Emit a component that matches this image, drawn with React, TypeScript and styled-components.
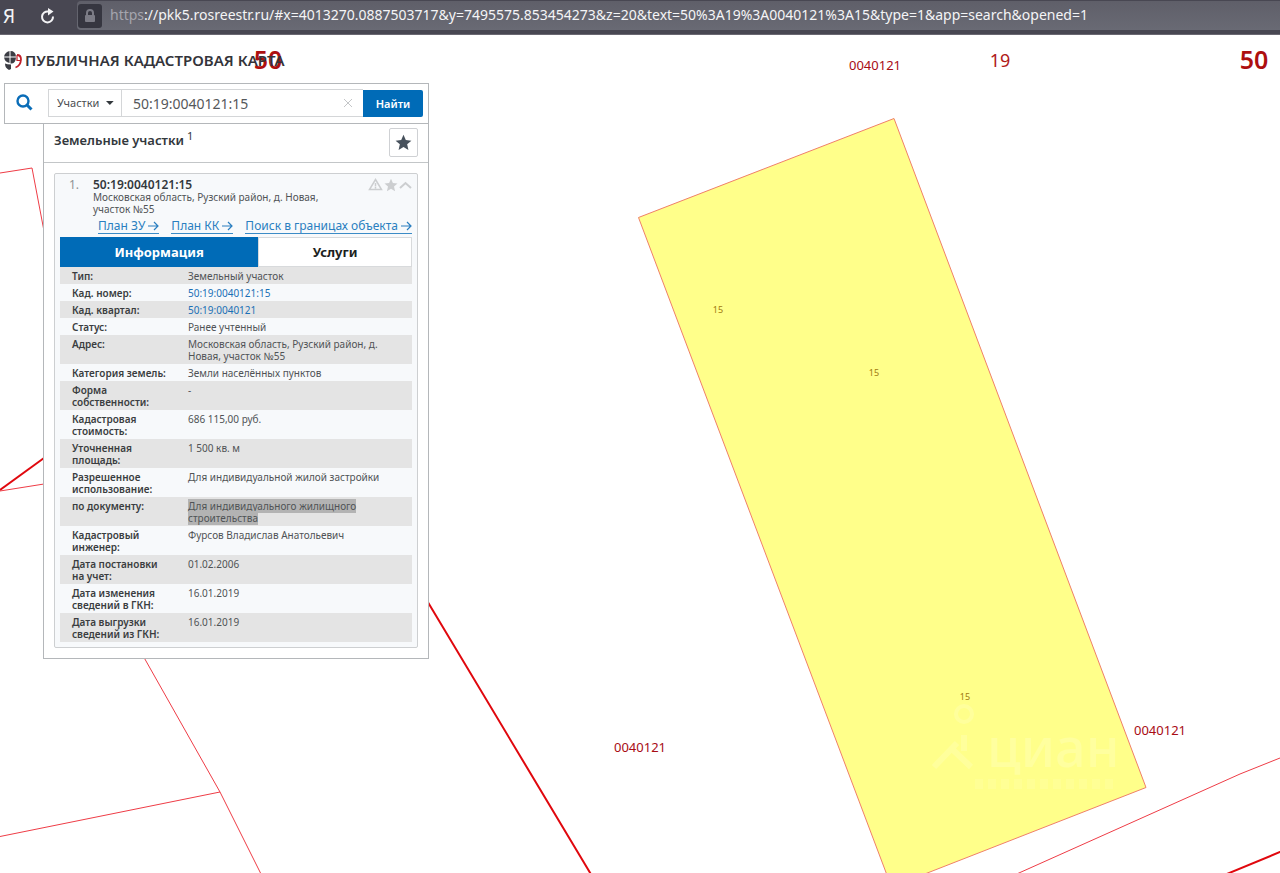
import React from 'react';
import styled, { createGlobalStyle, css } from 'styled-components';

const Global = createGlobalStyle`
  * { box-sizing: border-box; }
  body { margin: 0; background: #fff; }
  body, button, input, select { font-family: "Noto Sans", "Open Sans", sans-serif; }
`;

const Page = styled.div`
  display: flex;
  flex-direction: column;
  min-height: 100vh;
  color: #33383d;
`;

const BrowserBar = styled.header`
  display: flex;
  align-items: stretch;
  height: 35px;
  padding: 1px 0 4px;
  background: #484752;
  border-bottom: 1px solid #6a6872;
  color: #f4f4f6;
`;

const BarButton = styled.button<{ $width: number }>`
  display: flex;
  align-items: center;
  justify-content: flex-start;
  width: ${(p) => p.$width}px;
  padding: 0 0 0 3px;
  border: 0;
  background: none;
  color: inherit;
  font-size: 19px;
  line-height: 24px;
`;

const AddressBox = styled.div`
  display: flex;
  flex: 1;
  align-items: center;
  gap: 8px;
  min-width: 0;
  padding-left: 1px;
  border-radius: 4px 0 0 4px;
  background: linear-gradient(#5f5f69, #696a74);
`;

const LockBox = styled.span`
  display: flex;
  align-items: center;
  justify-content: center;
  width: 24px;
  height: 24px;
  border-radius: 3px;
  background: #363640;
`;

const Address = styled.div`
  overflow: hidden;
  padding-bottom: 2px;
  font-size: 14px;
  line-height: 20px;
  white-space: nowrap;
`;

const Scheme = styled.span`
  color: #a5a5ad;
`;

const MapArea = styled.main`
  position: relative;
  flex: 1;
  overflow: hidden;
`;

const MapCanvas = styled.svg`
  position: absolute;
  inset: 0;
  width: 100%;
  height: 100%;
`;

const labelKinds = {
  region: css`color: #ad0f0f; font-size: 25px; font-weight: 600;`,
  district: css`color: #b01a1a; font-size: 18px;`,
  quarter: css`color: #a80c14; font-size: 13px;`,
  parcel: css`color: #a07a10; font-size: 9px;`,
};

const MapLabel = styled.span<{ $x: number; $y: number; $kind: keyof typeof labelKinds }>`
  position: absolute;
  left: ${(p) => p.$x}px;
  top: ${(p) => p.$y}px;
  line-height: 1;
  transform: translate(-50%, -50%);
  ${(p) => labelKinds[p.$kind]}
`;

const Sidebar = styled.div`
  position: relative;
  width: 429px;
  max-width: 100%;
  padding: 0 0 16px 4px;
`;

const Brand = styled.h1`
  display: flex;
  align-items: center;
  gap: 3px;
  height: 48px;
  margin: 0;
  padding-top: 1px;
  color: #33343a;
  font-size: 15px;
  font-weight: 600;
  line-height: 20px;
  white-space: nowrap;
`;

const SearchBar = styled.form`
  display: flex;
  align-items: center;
  height: 41px;
  padding: 0 5px 1px 0;
  border: 1px solid #b4b7ba;
  background: #fff;
`;

const SearchTab = styled.button`
  display: flex;
  align-items: center;
  justify-content: center;
  width: 43px;
  height: 28px;
  padding: 0 4px 2px 0;
  border: 0;
  background: none;
`;

const Field = styled.div`
  display: flex;
  align-items: center;
  height: 28px;
  border: 1px solid #d4d6d8;
`;

const KindField = styled(Field)`
  gap: 5px;
  width: 74px;
  padding: 0 7px 0 8px;
`;

const KindSelect = styled.select`
  appearance: none;
  width: 46px;
  padding: 0;
  border: 0;
  background: none;
  color: #4a4d50;
  font-size: 11px;
  line-height: 16px;
`;

const QueryField = styled(Field)`
  flex: 1;
  min-width: 0;
  padding: 0 10px 0 11px;
  border-left: 0;
  border-right: 0;
`;

const QueryInput = styled.input`
  flex: 1;
  min-width: 0;
  padding: 2px 0 0;
  border: 0;
  outline: 0;
  background: none;
  color: #55585b;
  font-size: 14px;
  line-height: 20px;
`;

const IconButton = styled.button`
  display: flex;
  padding: 0;
  border: 0;
  background: none;
`;

const FindButton = styled.button`
  width: 60px;
  height: 27px;
  padding: 0;
  border: 0;
  border-radius: 0 2px 2px 0;
  background: #006bb7;
  color: #fff;
  font-size: 11px;
  font-weight: 600;
`;

const Results = styled.section`
  margin-left: 39px;
  padding-bottom: 10px;
  border: 1px solid #b4b7ba;
  border-top: 0;
  background: #fff;
`;

const ResultsHead = styled.div`
  display: flex;
  align-items: center;
  justify-content: space-between;
  height: 39px;
  padding: 0 10px 2px;
  border-bottom: 1px solid #c3c6c8;
`;

const ResultsTitle = styled.h2`
  display: flex;
  gap: 3px;
  margin: 0;
  padding-bottom: 5px;
  font-size: 13px;
  font-weight: 600;
  line-height: 20px;
`;

const Count = styled.sup`
  font-size: 11px;
  font-weight: 400;
  line-height: 12px;
`;

const FavouriteButton = styled.button`
  display: flex;
  align-items: center;
  justify-content: center;
  width: 29px;
  height: 29px;
  padding: 0;
  border: 1px solid #cfd1d4;
  border-radius: 2px;
  background: #fff;
`;

const Card = styled.article`
  margin: 10px 10px 0;
  padding: 4px 5px 5px;
  border: 1px solid #cdcfd1;
  border-radius: 2px;
  background: #f7f9fb;
`;

const CardHead = styled.div`
  display: flex;
  padding-left: 9px;
`;

const Ordinal = styled.span`
  width: 24px;
  color: #909395;
  font-size: 12px;
  line-height: 13px;
`;

const Summary = styled.div`
  flex: 1;
  min-width: 0;
`;

const ParcelNumber = styled.h3`
  margin: 0;
  font-size: 12px;
  font-weight: 600;
  line-height: 13px;
`;

const ParcelAddress = styled.p`
  width: 240px;
  margin: 0;
  color: #505356;
  font-size: 10px;
  line-height: 12px;
`;

const CardTools = styled.div`
  display: flex;
  align-items: center;
  align-self: flex-start;
  gap: 1px;
  height: 13px;
`;

const CardLinks = styled.nav`
  display: flex;
  justify-content: flex-end;
  gap: 12px;
  padding: 4px 0 3px;
`;

const CardLink = styled.a`
  display: inline-flex;
  align-items: center;
  gap: 3px;
  height: 15px;
  border-bottom: 1px solid #3b8bc6;
  color: #2a7fc0;
  font-size: 12px;
  line-height: 14px;
  text-decoration: none;
  white-space: nowrap;
`;

const Tabs = styled.div`
  display: flex;
  height: 30px;
`;

const Tab = styled.button<{ $active?: boolean }>`
  flex: ${(p) => (p.$active ? 199 : 154)} 1 0;
  padding: 0;
  border: 1px solid ${(p) => (p.$active ? '#006bb7' : '#d8dadc')};
  background: ${(p) => (p.$active ? '#006bb7' : '#fff')};
  color: ${(p) => (p.$active ? '#fff' : '#1d1f21')};
  font-size: 13px;
  font-weight: 700;
`;

const Details = styled.table`
  width: 100%;
  border-collapse: collapse;
  table-layout: fixed;
  font-size: 10px;
  line-height: 12px;
  text-align: left;
`;

const DetailRow = styled.tr`
  vertical-align: top;
  &:nth-child(odd) { background: #e4e4e4; }
`;

const DetailName = styled.th`
  width: 128px;
  padding: 3px 16px 2px 12px;
  color: #3a3d40;
  font-weight: 600;
`;

const DetailValue = styled.td`
  padding: 3px 26px 2px 0;
  color: #505356;
`;

const DetailLink = styled.a`
  color: #1a70b6;
  text-decoration: none;
`;

const Selected = styled.mark`
  background: #b3b3b3;
  color: inherit;
`;

type Detail = { name: string; value: string; kind?: 'link' | 'selected' };

const details: Detail[] = [
  { name: 'Тип:', value: 'Земельный участок' },
  { name: 'Кад. номер:', value: '50:19:0040121:15', kind: 'link' },
  { name: 'Кад. квартал:', value: '50:19:0040121', kind: 'link' },
  { name: 'Статус:', value: 'Ранее учтенный' },
  { name: 'Адрес:', value: 'Московская область, Рузский район, д. Новая, участок №55' },
  { name: 'Категория\u00a0земель:', value: 'Земли населённых пунктов' },
  { name: 'Форма собственности:', value: '-' },
  { name: 'Кадастровая стоимость:', value: '686 115,00 руб.' },
  { name: 'Уточненная площадь:', value: '1 500 кв. м' },
  { name: 'Разрешенное использование:', value: 'Для индивидуальной жилой застройки' },
  { name: 'по документу:', value: 'Для индивидуального жилищного строительства', kind: 'selected' },
  { name: 'Кадастровый инженер:', value: 'Фурсов Владислав Анатольевич' },
  { name: 'Дата постановки на\u00a0учет:', value: '01.02.2006' },
  { name: 'Дата изменения сведений в\u00a0ГКН:', value: '16.01.2019' },
  { name: 'Дата выгрузки сведений из\u00a0ГКН:', value: '16.01.2019' },
];

const Star = ({ size, color }: { size: number; color: string }) => (
  <svg width={size} height={size} viewBox="0 0 20 20" fill={color} aria-hidden="true">
    <path d="M10 1l2.700 6.100 6.600.700-5 4.400 1.500 6.600L10 15.400l-5.800 3.400 1.500-6.600-5-4.400 6.600-.700z" />
  </svg>
);

const Arrow = () => (
  <svg width="11" height="10" viewBox="0 0 11 10" fill="none" stroke="#2a7fc0" strokeWidth="1.200" aria-hidden="true">
    <path d="M0 5h10M6 1l4 4-4 4" />
  </svg>
);

function Value({ value, kind }: Detail) {
  if (kind === 'link') return <DetailLink href="#">{value}</DetailLink>;
  if (kind === 'selected') return <Selected>{value}</Selected>;
  return <>{value}</>;
}

function CadastralMap() {
  return (
    <>
      <MapCanvas aria-hidden="true">
        <g fill="none" stroke="#ee3c46" strokeWidth="1">
          <path d="M0 138L32 133L60 280" />
          <path d="M0 456L44 449" />
          <path d="M120 580L220 757L262 841L310 930" />
          <path d="M0 801.500L220 757" />
          <path d="M1010 842L1240 739L1280 723L1700 560" />
        </g>
        <g fill="none" stroke="#e0080e" strokeWidth="2">
          <path d="M0 455L44 423" />
          <path d="M400 520L429 569L592 841L640 920" />
          <path d="M1222 841L1280 817L1700 640" />
        </g>
        <path d="M638.500 182.500L894 83.500L1146 752.500L891.500 852Z" fill="#ffff8a" stroke="#f08068" />
        <g fill="none" stroke="#fff" strokeOpacity=".16">
          <circle cx="964" cy="679" r="8" strokeWidth="4" />
          <path d="M934 732L957 708M950 712L971 732M964 700V716" strokeWidth="6" />
          <path d="M975 749H1116" strokeWidth="10" strokeOpacity=".1" strokeDasharray="8 5" />
        </g>
        <text x="987" y="732" fill="#fff" fillOpacity=".18" fontFamily="Noto Sans" fontSize="54" fontWeight="500">циан</text>
      </MapCanvas>
      <MapLabel $kind="region" $x={268} $y={24}>50</MapLabel>
      <MapLabel $kind="quarter" $x={875} $y={30}>0040121</MapLabel>
      <MapLabel $kind="district" $x={1000} $y={25}>19</MapLabel>
      <MapLabel $kind="region" $x={1254} $y={24}>50</MapLabel>
      <MapLabel $kind="parcel" $x={718} $y={274}>15</MapLabel>
      <MapLabel $kind="parcel" $x={874} $y={337}>15</MapLabel>
      <MapLabel $kind="parcel" $x={965} $y={661}>15</MapLabel>
      <MapLabel $kind="quarter" $x={1160} $y={695}>0040121</MapLabel>
      <MapLabel $kind="quarter" $x={640} $y={712}>0040121</MapLabel>
    </>
  );
}

export default function App() {
  return (
    <Page>
      <Global />
      <BrowserBar>
        <BarButton $width={37} aria-label="Яндекс">Я</BarButton>
        <BarButton $width={40} aria-label="Обновить">
          <svg width="16" height="16" viewBox="0 0 16 16" fill="none" stroke="currentColor" strokeWidth="2">
            <path d="M13 8.500A5.500 5.500 0 1 1 8.500 3.500" />
            <path d="M8 0L13.500 3.500L8 7.500Z" fill="currentColor" stroke="none" />
          </svg>
        </BarButton>
        <AddressBox>
          <LockBox>
            <svg width="12" height="14" viewBox="0 0 12 14" aria-hidden="true">
              <path d="M3 6V4a3 3 0 0 1 6 0v2" fill="none" stroke="#7c7c86" strokeWidth="2" />
              <rect x="1" y="6" width="10" height="7" rx="1" fill="#7c7c86" />
            </svg>
          </LockBox>
          <Address>
            <Scheme>https</Scheme>://pkk5.rosreestr.ru/#x=4013270.0887503717&amp;y=7495575.853454273&amp;z=20&amp;text=50%3A19%3A0040121%3A15&amp;type=1&amp;app=search&amp;opened=1
          </Address>
        </AddressBox>
      </BrowserBar>
      <MapArea>
        <CadastralMap />
        <Sidebar>
          <Brand>
            <svg width="18" height="20" viewBox="0 0 18 20" aria-hidden="true">
              <path d="M5.500 1v5.500H0Q1 2 5.500 1zM6.500 1Q11.500 1 12 6.500H6.500zM0 7.500h5.500V13Q1 12 0 7.500zM6.500 7.500H12Q11.500 13 8 13.500H6.500zM1 13.500Q3 14.500 7 14.500V19L5 20Q1 18 1 13.500z" fill="#3b3d44" />
              <path d="M13 5Q17 5 17 9.500Q16.500 16 11.500 17.500" fill="none" stroke="#c0202a" strokeWidth="1.800" />
              <path d="M13 5V10.500H16" fill="none" stroke="#c0202a" strokeWidth="1.200" />
            </svg>
            ПУБЛИЧНАЯ КАДАСТРОВАЯ КАРТА
          </Brand>
          <SearchBar onSubmit={(e) => e.preventDefault()}>
            <SearchTab type="button" aria-label="Поиск">
              <svg width="17" height="17" viewBox="0 0 17 17" fill="none" stroke="#0a6db8" aria-hidden="true">
                <circle cx="7" cy="7" r="5.500" strokeWidth="2.400" />
                <path d="M11 11l4.500 4.500" strokeWidth="3" />
              </svg>
            </SearchTab>
            <KindField>
              <KindSelect aria-label="Тип объекта" defaultValue="Участки">
                <option>Участки</option>
              </KindSelect>
              <svg width="8" height="4" viewBox="0 0 8 4" aria-hidden="true"><path d="M0 0h8L4 4z" fill="#33383d" /></svg>
            </KindField>
            <QueryField>
              <QueryInput aria-label="Кадастровый номер" defaultValue="50:19:0040121:15" />
              <IconButton type="button" aria-label="Очистить">
                <svg width="10" height="10" viewBox="0 0 10 10" stroke="#c4c6c8"><path d="M1 1l8 8M9 1l-8 8" /></svg>
              </IconButton>
            </QueryField>
            <FindButton type="submit">Найти</FindButton>
          </SearchBar>
          <Results>
            <ResultsHead>
              <ResultsTitle>Земельные участки<Count>1</Count></ResultsTitle>
              <FavouriteButton aria-label="Избранное"><Star size={17} color="#47515c" /></FavouriteButton>
            </ResultsHead>
            <Card>
              <CardHead>
                <Ordinal>1.</Ordinal>
                <Summary>
                  <ParcelNumber>50:19:0040121:15</ParcelNumber>
                  <ParcelAddress>Московская область, Рузский район, д. Новая, участок №55</ParcelAddress>
                </Summary>
                <CardTools>
                  <IconButton aria-label="Сообщить об ошибке">
                    <svg width="15" height="13" viewBox="0 0 15 13" fill="none" stroke="#ccced0" strokeWidth="1.500">
                      <path d="M7.500 1.500l6 10h-12zM7.500 5v3.500M7.500 9v1.500" />
                    </svg>
                  </IconButton>
                  <IconButton aria-label="В избранное"><Star size={14} color="#ccced0" /></IconButton>
                  <IconButton aria-label="Свернуть">
                    <svg width="13" height="8" viewBox="0 0 13 8" fill="none" stroke="#ccced0" strokeWidth="2"><path d="M1 7l5.500-5L12 7" /></svg>
                  </IconButton>
                </CardTools>
              </CardHead>
              <CardLinks>
                <CardLink href="#">План ЗУ <Arrow /></CardLink>
                <CardLink href="#">План КК <Arrow /></CardLink>
                <CardLink href="#">Поиск в границах объекта <Arrow /></CardLink>
              </CardLinks>
              <Tabs role="tablist">
                <Tab role="tab" aria-selected="true" $active>Информация</Tab>
                <Tab role="tab" aria-selected="false">Услуги</Tab>
              </Tabs>
              <Details>
                <tbody>
                  {details.map((d) => (
                    <DetailRow key={d.name}>
                      <DetailName scope="row">{d.name}</DetailName>
                      <DetailValue><Value {...d} /></DetailValue>
                    </DetailRow>
                  ))}
                </tbody>
              </Details>
            </Card>
          </Results>
        </Sidebar>
      </MapArea>
    </Page>
  );
}
